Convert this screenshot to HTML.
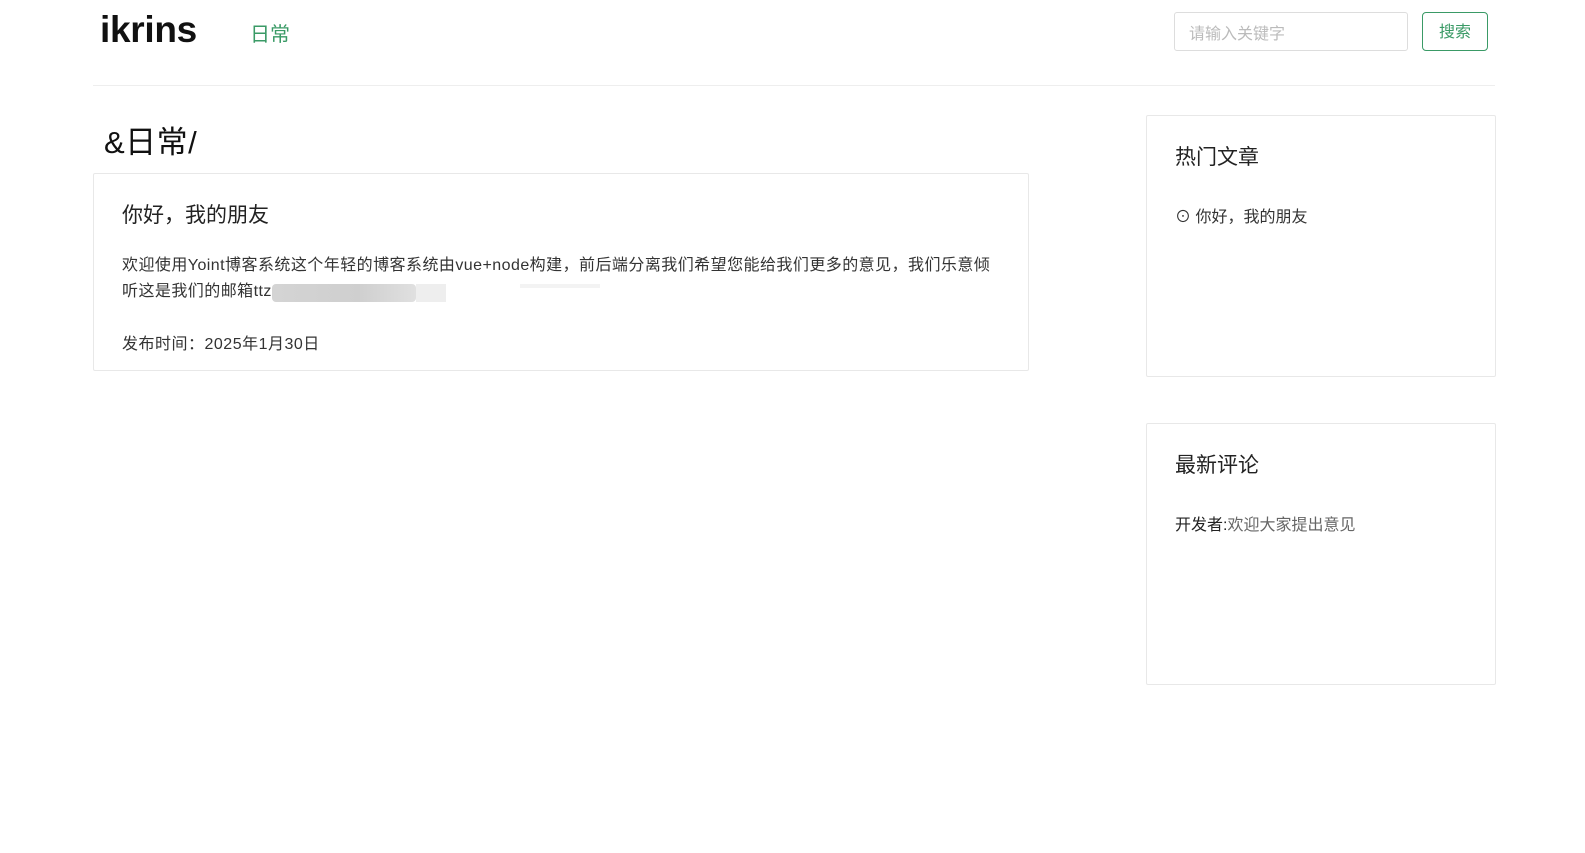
<!DOCTYPE html>
<html><head><meta charset="utf-8"><style>
*{margin:0;padding:0;box-sizing:border-box}
body{width:1585px;height:853px;background:#fff;font-family:"Liberation Sans","Noto Sans CJK SC",sans-serif;color:#222;position:relative;overflow:hidden}
.abs{position:absolute}
.logo{left:100px;top:9px;font-size:37px;font-weight:bold;color:#111;letter-spacing:-0.3px}
.nav{left:250px;top:18px;font-size:20px;color:#3a9a66}
.inp{left:1174px;top:12px;width:234px;height:39px;border:1px solid #ddd;border-radius:3px;font-size:16px;color:#bbb;padding:7px 14px}
.btn{left:1422px;top:12px;width:66px;height:39px;border:1px solid #3a9a66;border-radius:4px;font-size:16px;color:#3a9a66;text-align:center;line-height:39px}
.hr{left:93px;top:85px;width:1402px;height:1px;background:#eee}
.card{border:1px solid #e8e8e8;border-radius:2px}
</style></head><body>
<div class="abs logo">ikrins</div>
<div class="abs nav">日常</div>
<div class="abs inp">请输入关键字</div>
<div class="abs btn">搜索</div>
<div class="abs hr"></div>
<div class="abs" style="left:104px;top:117px;font-size:31px;color:#111;letter-spacing:0.5px">&amp;日常/</div>
<div class="abs card" style="left:93px;top:173px;width:936px;height:198px"></div>
<div class="abs" style="left:122px;top:199px;font-size:21px;color:#222">你好，我的朋友</div>
<div class="abs" style="left:122px;top:253px;width:900px;font-size:16px;line-height:26px;color:#333;letter-spacing:0.45px;white-space:nowrap">欢迎使用Yoint博客系统这个年轻的博客系统由vue+node构建，前后端分离我们希望您能给我们更多的意见，我们乐意倾<br>听这是我们的邮箱ttz</div>
<div class="abs" style="left:272px;top:284px;width:144px;height:18px;background:linear-gradient(90deg,#d4d4d4,#cfcfcf 60%,#e0e0e0);border-radius:4px"></div>
<div class="abs" style="left:416px;top:284px;width:30px;height:18px;background:#eee"></div>
<div class="abs" style="left:520px;top:284px;width:80px;height:4px;background:#f3f3f3"></div>
<div class="abs" style="left:122px;top:330px;font-size:16px;color:#333;letter-spacing:0.5px">发布时间：2025年1月30日</div>
<div class="abs card" style="left:1146px;top:115px;width:350px;height:262px"></div>
<div class="abs" style="left:1175px;top:141px;font-size:21px;color:#222">热门文章</div>
<div class="abs" style="left:1175px;top:203px;font-size:16px;color:#333">⊙ 你好，我的朋友</div>
<div class="abs card" style="left:1146px;top:423px;width:350px;height:262px"></div>
<div class="abs" style="left:1175px;top:449px;font-size:21px;color:#222">最新评论</div>
<div class="abs" style="left:1175px;top:511px;font-size:16px;color:#222">开发者:<span style="color:#666">欢迎大家提出意见</span></div>
</body></html>
